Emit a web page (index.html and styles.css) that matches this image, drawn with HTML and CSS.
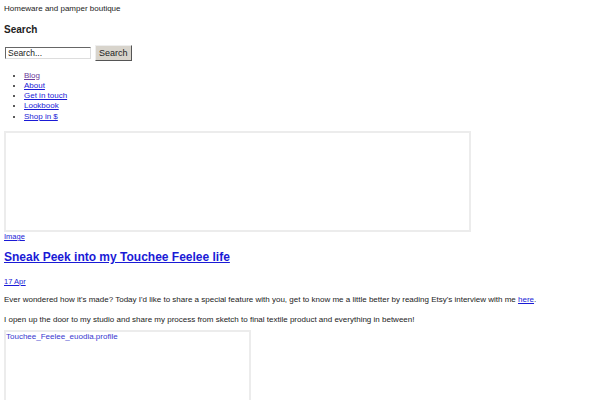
FILE: index.html
```html
<!DOCTYPE html>
<html lang="en">
<head>
    <meta charset="UTF-8">
    <meta name="viewport" content="width=device-width, initial-scale=1.0">
    <title>Touchee Feelee</title>
    <link rel="stylesheet" href="styles.css">
</head>
<body>
    <p class="tagline">Homeware and pamper boutique</p>

    <h2 class="search-title">Search</h2>
    <form class="search-form">
        <input type="text" class="search-input" value="Search...">
        <button type="button" class="search-button">Search</button>
    </form>

    <ul class="menu">
        <li><a href="#" class="visited">Blog</a></li>
        <li><a href="#">About</a></li>
        <li><a href="#">Get in touch</a></li>
        <li><a href="#">Lookbook</a></li>
        <li><a href="#">Shop in $</a></li>
    </ul>

    <div class="banner"></div>
    <a href="#" class="small-link">Image</a>

    <h1 class="post-title"><a href="#">Sneak Peek into my Touchee Feelee life</a></h1>
    <a href="#" class="small-link">17 Apr</a>

    <p class="first">Ever wondered how it's made? Today I'd like to share a special feature with you, get to know me a little better by reading Etsy's interview with me <a href="#">here</a>.</p>
    <p class="last">I open up the door to my studio and share my process from sketch to final textile product and everything in between!</p>

    <div class="photo"><a href="#">Touchee_Feelee_euodia.profile</a></div>
</body>
</html>
```

FILE: styles.css
```css
body {
    margin: 4px;
    font-family: "Liberation Sans", Arial, sans-serif;
    font-size: 8px;
    line-height: 1.25;
    color: #222;
}
a {
    color: #1a1ad6;
}
a.visited {
    color: #6a3a9a;
}
p {
    margin: 8px 0;
}
.tagline {
    margin-top: 0;
}
.search-title {
    font-size: 10px;
    margin: 10px 0 8px;
}
.search-form {
    display: flex;
    align-items: center;
    gap: 4px;
    margin-bottom: 10px;
}
.search-input {
    width: 80px;
    height: 8px;
    padding: 1px 2px;
    margin: 0 0 0 1px;
    font-family: inherit;
    font-size: 8.5px;
    color: #222;
    border: 1px solid;
    border-color: #666 #ddd #ddd #666;
}
.search-button {
    height: 16px;
    padding: 0 3px;
    font-family: inherit;
    font-size: 9px;
    color: #222;
    background: #d8d4cc;
    border: 1px solid;
    border-color: #eee #555 #555 #eee;
}
.menu {
    margin: 0 0 9px;
    padding-left: 20px;
    line-height: 10.3px;
}
.banner {
    width: 463px;
    height: 97px;
    border: 2px solid #ececec;
}
.small-link {
    font-size: 7.5px;
    display: inline-block;
}
.post-title {
    font-size: 12px;
    margin: 8px 0 12px;
}
.first {
    margin: 8px 0 10px;
}
.last {
    margin-bottom: 5px;
}
.photo {
    width: 243px;
    height: 100px;
    border: 2px solid #ececec;
    margin-top: 5px;
    line-height: 10px;
}
.photo a {
    color: #3838d0;
    text-decoration: none;
}
```
